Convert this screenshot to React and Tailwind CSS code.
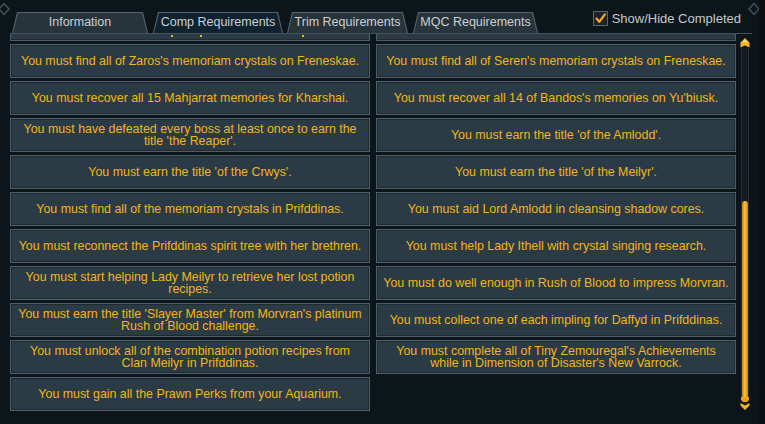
import React from 'react';

const tabs = [
  { label: 'Information', cls: 'w-[136px]' },
  { label: 'Comp Requirements', cls: 'w-[130px] ml-[5px]', active: true },
  { label: 'Trim Requirements', cls: 'w-[121px] ml-[4px]' },
  { label: 'MQC Requirements', cls: 'w-[125px] ml-[5px]' },
];

const reqs = [
  "You must find all of Zaros's memoriam crystals on Freneskae.",
  "You must find all of Seren's memoriam crystals on Freneskae.",
  'You must recover all 15 Mahjarrat memories for Kharshai.',
  "You must recover all 14 of Bandos's memories on Yu'biusk.",
  "You must have defeated every boss at least once to earn the\ntitle 'the Reaper'.",
  "You must earn the title 'of the Amlodd'.",
  "You must earn the title 'of the Crwys'.",
  "You must earn the title 'of the Meilyr'.",
  'You must find all of the memoriam crystals in Prifddinas.',
  'You must aid Lord Amlodd in cleansing shadow cores.',
  'You must reconnect the Prifddinas spirit tree with her brethren.',
  'You must help Lady Ithell with crystal singing research.',
  'You must start helping Lady Meilyr to retrieve her lost potion\nrecipes.',
  'You must do well enough in Rush of Blood to impress Morvran.',
  "You must earn the title 'Slayer Master' from Morvran's platinum\nRush of Blood challenge.",
  'You must collect one of each impling for Daffyd in Prifddinas.',
  'You must unlock all of the combination potion recipes from\nClan Meilyr in Prifddinas.',
  "You must complete all of Tiny Zemouregal's Achievements\nwhile in Dimension of Disaster's New Varrock.",
  'You must gain all the Prawn Perks from your Aquarium.',
];

// trapezoid tab: outer layer is the border colour, inner layer the fill
function Tab({ label, cls, active }) {
  return (
    <div className={`h-[21px] pt-px px-px bg-[#56646d] [clip-path:polygon(5px_0,calc(100%-5px)_0,100%_100%,0_100%)] ${cls}`}>
      <div
        className={`h-full flex items-center justify-center pb-[2px] [clip-path:polygon(5px_0,calc(100%-5px)_0,100%_100%,0_100%)] ${
          active ? 'bg-[#0f2230]' : 'bg-[#27343c]'
        }`}
      >
        <span className="whitespace-nowrap text-[12.5px] leading-[15px] text-[#cbd1d5]">{label}</span>
      </div>
    </div>
  );
}

function ReqCell({ text }) {
  return (
    <div className="h-[34px] flex items-center justify-center bg-[#2b3b45] border border-[#4f5e68] shadow-[inset_0_0_0_1px_#1f2b33]">
      <p className="text-center whitespace-pre-line text-[12.4px] leading-[12.5px] text-[#f2b51a]">{text}</p>
    </div>
  );
}

// bottom edge of a row scrolled out of view above
function CellStub({ marks }) {
  return (
    <div className="h-[7px] flex items-start bg-[#2b3b45] border-x border-b border-[#4f5e68] shadow-[inset_0_-1px_0_0_#1f2b33]">
      {marks.map((m) => (
        <span key={m} className={`mt-[1px] w-[2px] h-[2px] bg-[#f2b51a] ${m}`} />
      ))}
    </div>
  );
}

function Scrollbar() {
  return (
    <div className="ml-[4px] mt-[4px] w-[10px] flex flex-col items-center">
      <svg width="10" height="10" viewBox="0 0 10 10">
        <path d="M5 0 L9.5 4.5 L9.5 9.5 L5 7.5 L0.5 9.5 L0.5 4.5 Z" fill="#f3b32a" />
        <path d="M5 1.5 L8 4.8 L5 4 L2 4.8 Z" fill="#ffd77a" />
      </svg>
      <div className="w-[8px] h-[349px] bg-[#151b1e] border-x border-[#262e32] flex flex-col justify-end">
        <div className="h-[196px] rounded-t-[3px] bg-linear-to-r from-[#c47f0f] via-[#ffc53c] to-[#c47f0f]" />
      </div>
      <svg width="10" height="13" viewBox="0 0 10 13">
        <path d="M1 0 L9 0 L9 3 L7 5 L3 5 L1 3 Z" fill="#e9a41e" />
        <path d="M0.5 6 L5 8.5 L9.5 6 L9.5 8.5 L5 13 L0.5 8.5 Z" fill="#f3b32a" />
        <path d="M2 5.5 L8 5.5 L5 7.5 Z" fill="#2a2010" />
      </svg>
    </div>
  );
}

export default function App() {
  return (
    <div className="relative w-[765px] h-[424px] overflow-hidden bg-[#0c161a] border-r-[6px] border-[#0a0f11] font-['Liberation_Sans',Arial,sans-serif]">
      <svg className="absolute left-0 top-[2px]" width="10" height="14" viewBox="0 0 10 14">
        <path d="M-1 7 L4 1.5 L9 7 L4 12.5 Z" fill="none" stroke="#44525a" strokeWidth="1.5" />
      </svg>
      <svg className="absolute right-[0px] top-[2px]" width="12" height="14" viewBox="0 0 12 14">
        <path d="M2 7 L7 1.5 L12 7 L7 12.5 Z" fill="none" stroke="#44525a" strokeWidth="1.5" />
      </svg>

      <div className="flex h-[33px]">
        <div className="flex items-end pl-[12px]">
          {tabs.map((t) => (
            <Tab key={t.label} {...t} />
          ))}
        </div>
        <div className="ml-auto mr-[18px] mt-[11px] flex items-start gap-[4px]">
          <div className="w-[15px] h-[15px] bg-[#1c2326] border border-[#5b666d] flex items-center justify-center">
            <svg width="11" height="11" viewBox="0 0 11 11">
              <path d="M1.5 5.5 L4.3 8.8 L9.8 1.5" fill="none" stroke="#f3a628" strokeWidth="2.2" strokeLinecap="round" strokeLinejoin="round" />
            </svg>
          </div>
          <span className="text-[13px] leading-[15px] text-[#c4c9cc]">Show/Hide Completed</span>
        </div>
      </div>

      <div className="ml-[10px] w-[742px] border-t border-[#44525b] flex">
        <div className="w-[726px] h-[378px] overflow-hidden">
          <div className="grid grid-cols-2 gap-x-[6px] gap-y-[3px]">
            <CellStub marks={['ml-[160px]', 'ml-[27px]', 'ml-[100px]']} />
            <CellStub marks={[]} />
            {reqs.map((r, i) => (
              <ReqCell key={i} text={r} />
            ))}
          </div>
        </div>
        <Scrollbar />
      </div>
    </div>
  );
}
